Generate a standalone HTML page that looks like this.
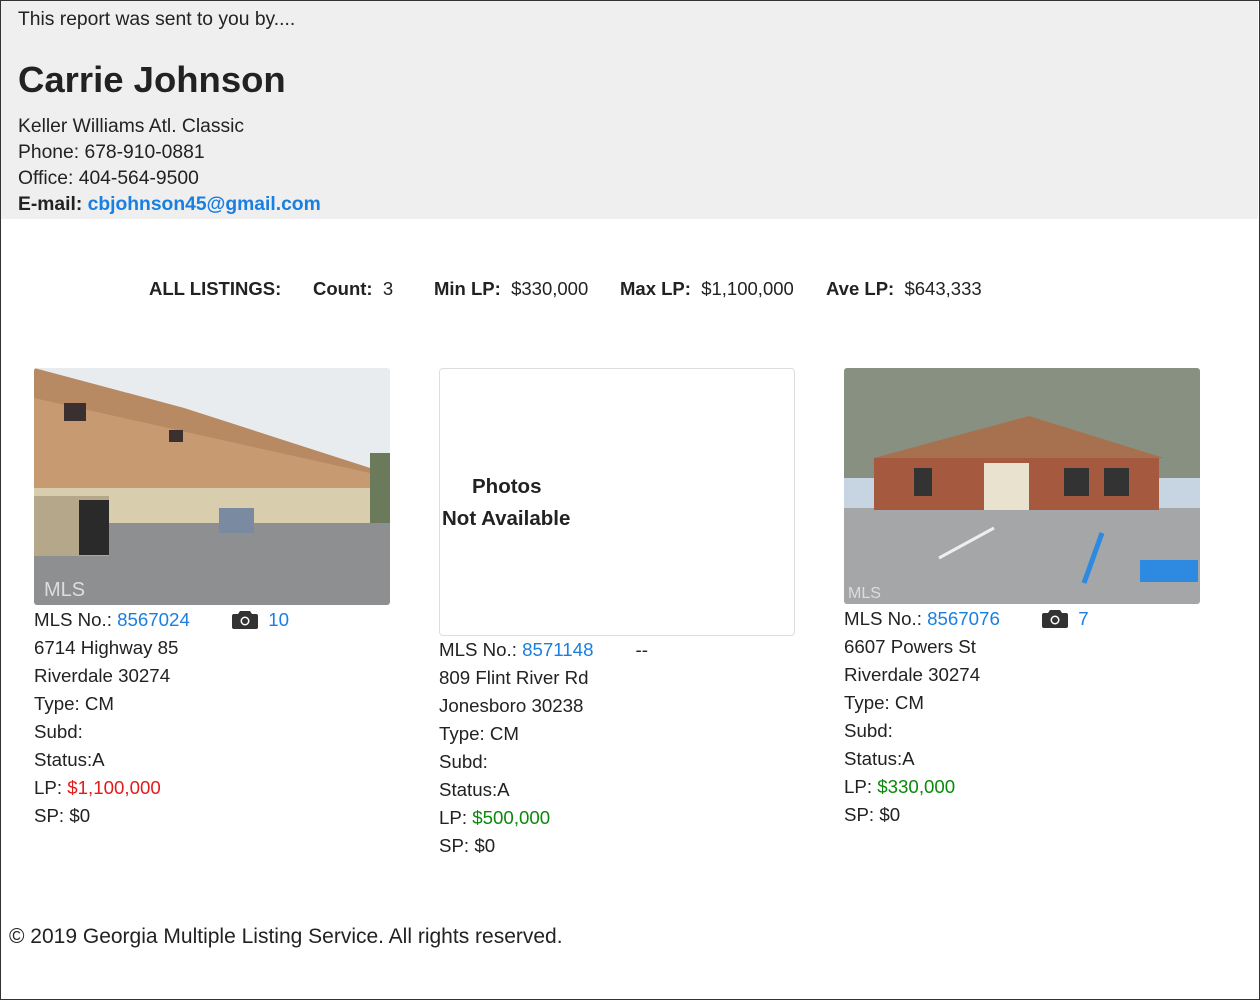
<!DOCTYPE html>
<html><head><meta charset="utf-8"><style>
*{margin:0;padding:0;box-sizing:border-box}
body{width:1260px;height:1000px;font-family:"Liberation Sans",Arial,sans-serif;color:#222;background:#fff;position:relative;overflow:hidden}
.frame{position:absolute;left:0;top:0;width:1260px;height:1000px;border:1px solid #333}
.hdr{position:absolute;left:1px;top:1px;width:1257px;height:218px;background:#efefef}
.t{position:absolute;white-space:nowrap;font-size:18.5px}
.h{font-size:19.3px}
a{color:#1a7fe0;text-decoration:none}
.b{font-weight:bold}
.col{position:absolute;font-size:18.7px;line-height:28px}
.cam{display:inline-block;vertical-align:-3px}
.red{color:#e31b1b}.grn{color:#0a8a0a}.blu{color:#1a7fe0}
</style></head><body>
<div class="hdr"></div>
<div class="t h" style="left:18px;top:9px">This report was sent to you by....</div>
<div class="t b" style="left:18px;top:59px;font-size:36.5px">Carrie Johnson</div>
<div class="t h" style="left:18px;top:116px">Keller Williams Atl. Classic</div>
<div class="t h" style="left:18px;top:142px">Phone: 678-910-0881</div>
<div class="t h" style="left:18px;top:168px">Office: 404-564-9500</div>
<div class="t b h" style="left:18px;top:194px">E-mail: <a>cbjohnson45@gmail.com</a></div>

<div class="t" style="left:149px;top:278px"><b>ALL LISTINGS:</b></div>
<div class="t" style="left:313px;top:278px"><b>Count:</b>&nbsp; 3</div>
<div class="t" style="left:434px;top:278px"><b>Min LP:</b>&nbsp; $330,000</div>
<div class="t" style="left:620px;top:278px"><b>Max LP:</b>&nbsp; $1,100,000</div>
<div class="t" style="left:826px;top:278px"><b>Ave LP:</b>&nbsp; $643,333</div>

<svg style="position:absolute;left:34px;top:368px;border-radius:3px" width="356" height="237">
<rect width="356" height="237" fill="#e9ecef"/>
<rect y="150" width="356" height="87" fill="#8e8f91"/>
<polygon points="0,0 150,40 336,100 336,135 0,135" fill="#c89a72"/>
<polygon points="0,0 150,40 336,100 336,105 0,30" fill="#b88a64"/>
<rect y="120" width="336" height="35" fill="#d8ceae"/>
<rect x="0" y="128" width="75" height="60" fill="#b5a88a"/>
<rect x="45" y="132" width="30" height="55" fill="#2a2a2a"/>
<rect x="185" y="140" width="35" height="25" fill="#7a8aa0"/>
<rect x="30" y="35" width="22" height="18" fill="#3a3030"/>
<rect x="135" y="62" width="14" height="12" fill="#3a3030"/>
<rect x="336" y="85" width="20" height="70" fill="#6b7a5a"/>
<text x="10" y="228" fill="#ddd" font-size="20" font-family="Liberation Sans">MLS</text>
</svg>
<div style="position:absolute;left:439px;top:368px;width:356px;height:268px;border:1px solid #ddd;border-radius:4px"></div>
<div class="t b" style="left:472px;top:475px;font-size:20.5px">Photos</div>
<div class="t b" style="left:442px;top:507px;font-size:20.5px">Not Available</div>
<svg style="position:absolute;left:844px;top:368px;border-radius:3px" width="356" height="236">
<rect width="356" height="236" fill="#c7d4e2"/>
<rect y="0" width="356" height="110" fill="#6e7558" opacity=".7"/>
<rect y="140" width="356" height="96" fill="#a4a6a8"/>
<polygon points="30,90 185,48 320,90" fill="#a7714f"/>
<rect x="30" y="90" width="285" height="52" fill="#a55a3f"/>
<rect x="140" y="95" width="45" height="47" fill="#e9e2cf"/>
<rect x="70" y="100" width="18" height="28" fill="#333"/>
<rect x="220" y="100" width="25" height="28" fill="#333"/>
<rect x="260" y="100" width="25" height="28" fill="#333"/>
<line x1="95" y1="190" x2="150" y2="160" stroke="#eee" stroke-width="3"/>
<line x1="240" y1="215" x2="258" y2="165" stroke="#2d8ae0" stroke-width="5"/>
<rect x="296" y="192" width="58" height="22" fill="#2d8ae0"/>
<text x="4" y="230" fill="#ddd" font-size="16" font-family="Liberation Sans">MLS</text>
</svg>

<div class="col" style="left:34px;top:606px">
<div>MLS No.: <span class="blu">8567024</span><span style="display:inline-block;width:42px"></span><svg class="cam" width="26" height="20" viewBox="0 0 26 20"><path d="M8 2h10l2 3h4a2 2 0 0 1 2 2v11a2 2 0 0 1-2 2H2a2 2 0 0 1-2-2V7a2 2 0 0 1 2-2h4z" fill="#333"/><circle cx="13" cy="12" r="4.5" fill="#fff"/><circle cx="13" cy="12" r="3" fill="#333"/></svg>&nbsp;&nbsp;<span class="blu">10</span></div>
<div>6714 Highway 85</div><div>Riverdale 30274</div><div>Type: CM</div><div>Subd:</div><div>Status:A</div>
<div>LP: <span class="red">$1,100,000</span></div><div>SP: $0</div></div>

<div class="col" style="left:439px;top:636px">
<div>MLS No.: <span class="blu">8571148</span><span style="display:inline-block;width:42px"></span>--</div>
<div>809 Flint River Rd</div><div>Jonesboro 30238</div><div>Type: CM</div><div>Subd:</div><div>Status:A</div>
<div>LP: <span class="grn">$500,000</span></div><div>SP: $0</div></div>

<div class="col" style="left:844px;top:605px">
<div>MLS No.: <span class="blu">8567076</span><span style="display:inline-block;width:42px"></span><svg class="cam" width="26" height="20" viewBox="0 0 26 20"><path d="M8 2h10l2 3h4a2 2 0 0 1 2 2v11a2 2 0 0 1-2 2H2a2 2 0 0 1-2-2V7a2 2 0 0 1 2-2h4z" fill="#333"/><circle cx="13" cy="12" r="4.5" fill="#fff"/><circle cx="13" cy="12" r="3" fill="#333"/></svg>&nbsp;&nbsp;<span class="blu">7</span></div>
<div>6607 Powers St</div><div>Riverdale 30274</div><div>Type: CM</div><div>Subd:</div><div>Status:A</div>
<div>LP: <span class="grn">$330,000</span></div><div>SP: $0</div></div>

<div class="t" style="left:9px;top:925px;font-size:21px">© 2019 Georgia Multiple Listing Service. All rights reserved.</div>
<div class="frame"></div>
</body></html>
